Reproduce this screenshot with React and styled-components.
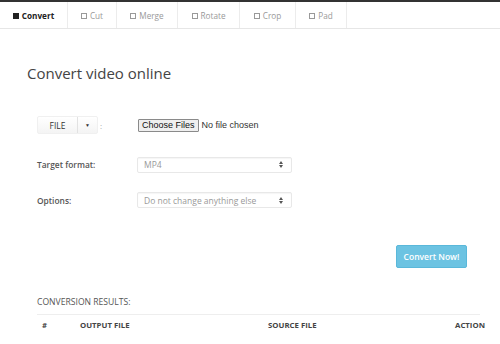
import React from "react";
import styled, { createGlobalStyle } from "styled-components";

const Global = createGlobalStyle`
  html, body { margin: 0; padding: 0; background: #fff; }
  body { font-family: "Open Sans", "Liberation Sans", sans-serif; color: #333; }
  * { box-sizing: border-box; }
`;

const Page = styled.div`
  width: 500px;
  height: 344px;
  overflow: hidden;
  border-top: 2px solid #333;
`;

const Tabs = styled.nav`
  display: flex;
  height: 27px;
  border-bottom: 1px solid #e6e6e6;
`;

const Tab = styled.div`
  display: flex;
  align-items: center;
  justify-content: center;
  gap: 2px;
  width: ${(p) => p.$w}px;
  border-right: 1px solid #ececec;
  font-size: 8.2px;
  font-weight: ${(p) => (p.$active ? 700 : 400)};
  color: ${(p) => (p.$active ? "#222" : "#999")};
  padding-top: 1px;
`;

const Box = styled.span`
  display: inline-block;
  width: 6px;
  height: 6px;
  border: 1px solid ${(p) => (p.$filled ? "#222" : "#999")};
  background: ${(p) => (p.$filled ? "#222" : "transparent")};
  margin-right: 1px;
`;

const Main = styled.main`
  padding: 34px 10px 0 37px;
`;

const Title = styled.h1`
  margin: 0 0 0 -10px;
  font-size: 15px;
  font-weight: 400;
  color: #444;
  line-height: 20px;
`;

const Row = styled.div`
  display: flex;
  align-items: center;
  height: ${(p) => p.$h}px;
  margin-top: ${(p) => p.$mt}px;
`;

const Label = styled.div`
  width: 100px;
  font-size: 8.4px;
  font-weight: 600;
  color: #555;
`;

const SplitBtn = styled.div`
  display: flex;
  height: 18px;
  border: 1px solid #f0f0f0;
  border-radius: 2px;
  background: linear-gradient(#fff, #f4f4f4);
  font-size: 8.5px;
  color: #333;
`;

const SplitMain = styled.div`
  display: flex;
  align-items: center;
  justify-content: center;
  width: 40px;
  border-right: 1px solid #e2e2e2;
`;

const SplitCaret = styled.div`
  display: flex;
  align-items: center;
  justify-content: center;
  width: 19px;
  font-size: 5px;
`;

const Colon = styled.span`
  width: 40px;
  font-size: 8px;
  color: #aaa;
  padding-left: 2px;
`;

const FileBtn = styled.button`
  height: 13px;
  padding: 0 3px;
  font-family: "Liberation Sans", Arial, sans-serif;
  font-size: 9px;
  line-height: 11px;
  color: #111;
  background: #efefef;
  border: 1px solid #8a8a8a;
  border-radius: 1px;
`;

const NoFile = styled.span`
  font-family: "Liberation Sans", Arial, sans-serif;
  font-size: 9px;
  color: #333;
  margin-left: 3px;
`;

const Select = styled.div`
  display: flex;
  align-items: center;
  justify-content: space-between;
  width: 155px;
  height: 16px;
  padding: 0 8px 0 6px;
  border: 1px solid #e8e8e8;
  border-radius: 2px;
  box-shadow: inset 0 1px 1px rgba(0, 0, 0, 0.04);
  font-size: 8.5px;
  color: #999;
`;

const Arrows = styled.svg`
  width: 4px;
  height: 7px;
`;

const Actions = styled.div`
  display: flex;
  justify-content: flex-end;
  margin-top: 37px;
  padding-right: 23px;
`;

const Primary = styled.button`
  width: 71px;
  height: 23px;
  border: 1px solid #5ab8da;
  border-radius: 2px;
  background: #6cc3e2;
  color: #fff;
  font-family: "Open Sans", sans-serif;
  font-size: 8.5px;
  font-weight: 600;
`;

const Results = styled.div`
  margin-top: 28px;
  font-size: 8.6px;
  color: #555;
`;

const Table = styled.div`
  margin-top: 6px;
  border-top: 1px solid #eee;
  display: grid;
  grid-template-columns: 43px 188px 187px auto;
  height: 20px;
  align-items: center;
  font-size: 7.8px;
  font-weight: 700;
  color: #444;
  margin-right: 10px;
`;

const Th = styled.div`
  padding-left: ${(p) => p.$pl || 0}px;
  text-align: ${(p) => (p.$right ? "right" : "left")};
  padding-right: ${(p) => (p.$right ? 3 : 0)}px;
`;

const SelectArrows = () => (
  <Arrows viewBox="0 0 4 7">
    <path d="M0 3 L2 0 L4 3 Z M0 4 L2 7 L4 4 Z" fill="#555" />
  </Arrows>
);

const tabs = [
  ["Convert", 68, true],
  ["Cut", 49],
  ["Merge", 61],
  ["Rotate", 62],
  ["Crop", 56],
  ["Pad", 51],
];

export default function App() {
  return (
    <Page>
      <Global />
      <Tabs>
        {tabs.map(([name, w, active]) => (
          <Tab key={name} $w={w} $active={active}>
            <Box $filled={active} />
            {name}
          </Tab>
        ))}
      </Tabs>
      <Main>
        <Title>Convert video online</Title>
        <Row $h={18} $mt={33}>
          <SplitBtn>
            <SplitMain>FILE</SplitMain>
            <SplitCaret>▼</SplitCaret>
          </SplitBtn>
          <Colon>:</Colon>
          <FileBtn>Choose Files</FileBtn>
          <NoFile>No file chosen</NoFile>
        </Row>
        <Row $h={17} $mt={22}>
          <Label>Target format:</Label>
          <Select>
            MP4
            <SelectArrows />
          </Select>
        </Row>
        <Row $h={16} $mt={19}>
          <Label>Options:</Label>
          <Select>
            Do not change anything else
            <SelectArrows />
          </Select>
        </Row>
        <Actions>
          <Primary>Convert Now!</Primary>
        </Actions>
        <Results>CONVERSION RESULTS:</Results>
        <Table>
          <Th $pl={5}>#</Th>
          <Th>OUTPUT FILE</Th>
          <Th>SOURCE FILE</Th>
          <Th $right>ACTION</Th>
        </Table>
      </Main>
    </Page>
  );
}
